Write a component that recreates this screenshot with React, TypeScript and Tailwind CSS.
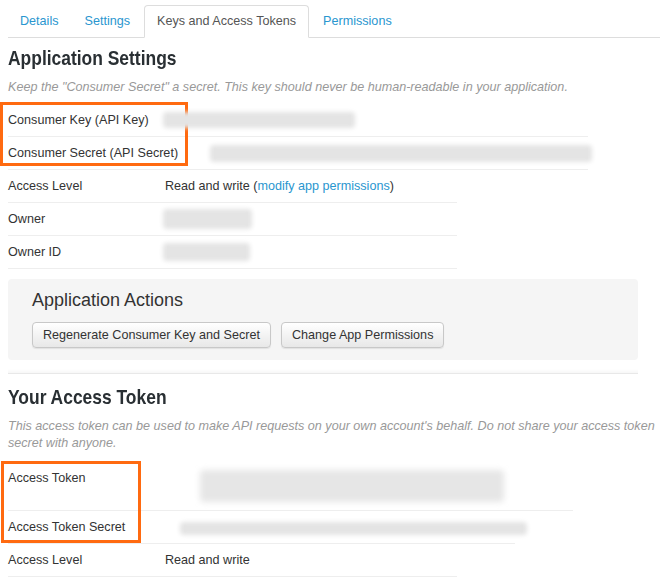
import React from 'react';

const sans = { fontFamily: '"Liberation Sans", Arial, sans-serif' };

const tabs = ['Details', 'Settings', 'Keys and Access Tokens', 'Permissions'];

function Tabs() {
  return (
    <div className="flex w-[652px] border-b border-[#dddddd] text-[12.6px] leading-4">
      {tabs.map((t) =>
        t === 'Keys and Access Tokens' ? (
          <div
            key={t}
            className="-mb-px mr-0.5 rounded-t border border-[#dddddd] border-b-white bg-white px-3 pb-[8px] pt-[7px] text-[#555555]"
          >
            {t}
          </div>
        ) : (
          <a key={t} className="mr-0.5 px-3 pb-[8px] pt-[8px] text-[#2a96cf]">
            {t}
          </a>
        )
      )}
    </div>
  );
}

// the original heading face is a narrow grotesque, squeeze Liberation to match
function Heading({ children }: { children: React.ReactNode }) {
  return (
    <h2 className="origin-left scale-x-[0.83] whitespace-nowrap text-[21px] font-bold leading-6 text-[#292f33]">
      {children}
    </h2>
  );
}

function Blur({ className }: { className: string }) {
  return <div className={`rounded-sm bg-[#e4e4e4] blur-[2px] ${className}`} />;
}

function Row({
  label,
  width,
  children,
}: {
  label: string;
  width: string;
  children?: React.ReactNode;
}) {
  return (
    <div className={`flex h-[33px] items-center border-b border-[#eeeeee] ${width}`}>
      <div className="w-[157px] shrink-0 whitespace-nowrap">{label}</div>
      <div className="flex flex-1 items-center">{children}</div>
    </div>
  );
}

function Annotation({ className }: { className: string }) {
  return <div className={`pointer-events-none absolute border-[3px] border-[#ff6a10] ${className}`} />;
}

const btn =
  'h-[26px] rounded border border-[#c8c8c8] bg-gradient-to-b from-white to-[#e8e8e8] px-[10px] text-[12.6px] text-[#333333] shadow-[0_1px_1px_rgba(0,0,0,0.08)]';

export default function App() {
  return (
    <div className="min-h-[580px] w-[666px] bg-white pl-2 pt-[5px] text-[12.6px] text-[#333333]" style={sans}>
      <Tabs />

      <div className="mt-2">
        <Heading>Application Settings</Heading>
      </div>
      <p className="mt-[9px] italic leading-[17px] text-[#999999]">
        Keep the "Consumer Secret" a secret. This key should never be human-readable in your application.
      </p>

      <div className="relative mt-2">
        <Annotation className="-left-2 -top-[2px] h-[64px] w-[188px]" />
        <Row label="Consumer Key (API Key)" width="w-[580px]">
          <Blur className="-ml-0.5 h-4 w-[192px]" />
        </Row>
        <Row label="Consumer Secret (API Secret)" width="w-[580px]">
          <Blur className="ml-[45px] h-[17px] w-[382px]" />
        </Row>
        <Row label="Access Level" width="w-[449px]">
          <span>
            Read and write (<a className="text-[#2a96cf]">modify app permissions</a>)
          </span>
        </Row>
        <Row label="Owner" width="w-[449px]">
          <Blur className="-ml-0.5 h-5 w-[89px]" />
        </Row>
        <Row label="Owner ID" width="w-[449px]">
          <Blur className="-ml-0.5 h-[18px] w-[87px]" />
        </Row>
      </div>

      <div className="mt-[10px] w-[630px] rounded bg-[#f5f5f5] px-6 pb-3 pt-[9px]">
        <h3 className="text-[18px] leading-6 text-[#333333]">Application Actions</h3>
        <div className="mt-[10px] flex gap-[10px]">
          <button className={btn}>Regenerate Consumer Key and Secret</button>
          <button className={btn}>Change App Permissions</button>
        </div>
      </div>

      <div className="mt-[9px] h-[5px] w-[630px] border-b border-[#e8e8e8] bg-gradient-to-b from-white to-[#f7f7f7]" />

      <div className="mt-[11px]">
        <Heading>Your Access Token</Heading>
      </div>
      <p className="mt-[9px] w-[652px] italic leading-[17px] text-[#999999]">
        This access token can be used to make API requests on your own account's behalf. Do not share your access token
        secret with anyone.
      </p>

      <div className="relative mt-[10px]">
        <Annotation className="-left-[7px] -top-px h-[82px] w-[140px]" />
        <div className="flex h-[49px] w-[565px] border-b border-[#eeeeee] pt-[8px]">
          <div className="w-[157px] shrink-0 leading-[17px]">Access Token</div>
          <div className="ml-[35px] h-[32px] w-[304px] rounded-sm bg-[#e6e6e6] blur-[3px]" />
        </div>
        <Row label="Access Token Secret" width="w-[507px]">
          <Blur className="ml-[15px] mt-0.5 h-[13px] w-[347px]" />
        </Row>
        <Row label="Access Level" width="w-[449px]">
          <span>Read and write</span>
        </Row>
      </div>
    </div>
  );
}
